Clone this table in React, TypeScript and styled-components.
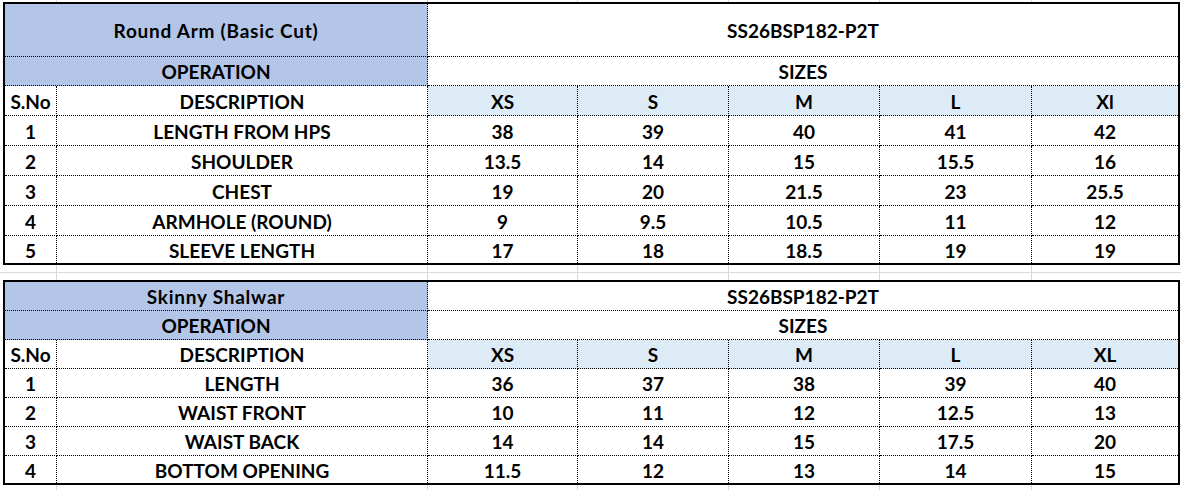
import React from "react";
import styled, { createGlobalStyle } from "styled-components";

const GlobalStyle = createGlobalStyle`
  html, body { margin: 0; padding: 0; background: #ffffff; }
  body { font-family: Lato, "Liberation Sans", sans-serif; }
`;

const TABLE_COLS = "52px 371px 150px 151px 151px 152px 146px";
const BAND_COLS = "57px 371px 150px 151px 151px 152px 149px";

const Sheet = styled.div`
  display: flex;
  flex-direction: column;
  width: 1181px;
`;

const Band = styled.div<{ $h: number; $rule?: boolean }>`
  display: grid;
  grid-template-columns: ${BAND_COLS};
  height: ${(p) => p.$h}px;
  box-sizing: border-box;
  border-bottom: ${(p) => (p.$rule ? "1px solid #d9d9d9" : "none")};
`;

const BandCell = styled.div`
  box-sizing: border-box;
  border-right: 1px solid #d9d9d9;
  &:last-child {
    border-right: none;
  }
`;

const Table = styled.div<{ $rows: string }>`
  display: grid;
  grid-template-columns: ${TABLE_COLS};
  grid-template-rows: ${(p) => p.$rows};
  width: 1177px;
  margin-left: 3px;
  box-sizing: border-box;
  border: 2px solid #000;
  font-family: Lato, "Liberation Sans", sans-serif;
  font-weight: 700;
  font-size: 19px;
  color: #000;
`;

type Tone = "title" | "size" | "plain";

const Cell = styled.div<{
  $span?: number;
  $tone?: Tone;
  $lastCol?: boolean;
  $lastRow?: boolean;
  $loose?: boolean;
}>`
  grid-column: span ${(p) => p.$span ?? 1};
  box-sizing: border-box;
  display: flex;
  align-items: center;
  justify-content: center;
  padding-top: 1px;
  white-space: nowrap;
  letter-spacing: ${(p) => (p.$loose ? "0.75px" : "normal")};
  background: ${(p) =>
    p.$tone === "title" ? "#b4c6e7" : p.$tone === "size" ? "#ddebf7" : "#ffffff"};
  border-right: ${(p) => (p.$lastCol ? "none" : "1px dotted #000")};
  border-bottom: ${(p) => (p.$lastRow ? "none" : "1px dotted #000")};
`;

type Row = [string, string, ...string[]];

interface SpecProps {
  title: string;
  code: string;
  sizes: string[];
  rows: Row[];
  rowTemplate: string;
}

const SpecTable: React.FC<SpecProps> = ({ title, code, sizes, rows, rowTemplate }) => (
  <Table $rows={rowTemplate}>
    <Cell $span={2} $tone="title" $loose>
      {title}
    </Cell>
    <Cell $span={5} $lastCol>
      {code}
    </Cell>
    <Cell $span={2} $tone="title">
      OPERATION
    </Cell>
    <Cell $span={5} $lastCol>
      SIZES
    </Cell>
    <Cell>S.No</Cell>
    <Cell>DESCRIPTION</Cell>
    {sizes.map((s, i) => (
      <Cell key={s} $tone="size" $lastCol={i === sizes.length - 1}>
        {s}
      </Cell>
    ))}
    {rows.map((r, ri) =>
      r.map((v, ci) => (
        <Cell
          key={`${ri}-${ci}`}
          $lastCol={ci === r.length - 1}
          $lastRow={ri === rows.length - 1}
        >
          {v}
        </Cell>
      ))
    )}
  </Table>
);

const GridBand: React.FC<{ h: number; rule?: boolean }> = ({ h, rule }) => (
  <Band $h={h} $rule={rule}>
    {Array.from({ length: 7 }).map((_, i) => (
      <BandCell key={i} />
    ))}
  </Band>
);

const topRows: Row[] = [
  ["1", "LENGTH FROM HPS", "38", "39", "40", "41", "42"],
  ["2", "SHOULDER", "13.5", "14", "15", "15.5", "16"],
  ["3", "CHEST", "19", "20", "21.5", "23", "25.5"],
  ["4", "ARMHOLE (ROUND)", "9", "9.5", "10.5", "11", "12"],
  ["5", "SLEEVE LENGTH", "17", "18", "18.5", "19", "19"],
];

const bottomRows: Row[] = [
  ["1", "LENGTH", "36", "37", "38", "39", "40"],
  ["2", "WAIST FRONT", "10", "11", "12", "12.5", "13"],
  ["3", "WAIST BACK", "14", "14", "15", "17.5", "20"],
  ["4", "BOTTOM OPENING", "11.5", "12", "13", "14", "15"],
];

export default function App() {
  return (
    <>
      <GlobalStyle />
      <Sheet>
        <GridBand h={2} />
        <SpecTable
          title="Round Arm (Basic Cut)"
          code="SS26BSP182-P2T"
          sizes={["XS", "S", "M", "L", "Xl"]}
          rows={topRows}
          rowTemplate="53px 29px 30px 30px 30px 30px 30px 27px"
        />
        <GridBand h={8} rule />
        <GridBand h={7} />
        <SpecTable
          title="Skinny Shalwar"
          code="SS26BSP182-P2T"
          sizes={["XS", "S", "M", "L", "XL"]}
          rows={bottomRows}
          rowTemplate="29px 29px 29px 29px 29px 29px 27px"
        />
        <GridBand h={5} />
      </Sheet>
    </>
  );
}
